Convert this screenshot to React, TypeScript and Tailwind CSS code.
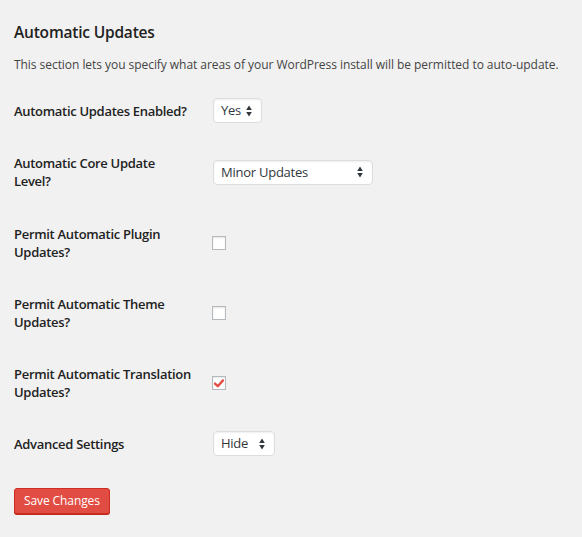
import React from "react";

function Arrows() {
  return (
    <svg width="6" height="12" viewBox="0 0 6 12" className="shrink-0">
      <path d="M3 0.5 L5.8 5 L0.2 5 Z" fill="#32373c" />
      <path d="M3 11.5 L5.8 7 L0.2 7 Z" fill="#32373c" />
    </svg>
  );
}

function Select({ value, width }: { value: string; width: string }) {
  return (
    <div
      className={`flex h-[25px] items-center justify-between rounded-[4px] border border-[#dddddd] bg-white pl-[7px] pr-[9px] text-[13px] tracking-[-0.25px] text-[#32373c] shadow-[inset_0_1px_2px_rgba(0,0,0,0.07)] ${width}`}
    >
      <span className="leading-none">{value}</span>
      <Arrows />
    </div>
  );
}

function Checkbox({ checked }: { checked?: boolean }) {
  return (
    <div className="-ml-px flex size-[14px] items-center justify-center border border-[#b4b9be] bg-white shadow-[inset_0_1px_2px_rgba(0,0,0,0.1)]">
      {checked && (
        <svg width="10" height="9" viewBox="0 0 10 9">
          <path
            d="M1 4.6 L3.8 7.2 L9 1.4"
            fill="none"
            stroke="#e14d43"
            strokeWidth="2.4"
            strokeLinecap="round"
            strokeLinejoin="round"
          />
        </svg>
      )}
    </div>
  );
}

function Row({
  label,
  children,
  className = "",
}: {
  label: React.ReactNode;
  children: React.ReactNode;
  className?: string;
}) {
  return (
    <div className={`flex items-center ${className}`}>
      <div className="w-[199px] shrink-0 whitespace-nowrap text-[13px] font-semibold leading-[18px] tracking-[-0.3px] text-[#222222]">
        {label}
      </div>
      <div className="flex items-center">{children}</div>
    </div>
  );
}

export default function App() {
  return (
    <div
      className="min-h-screen w-full bg-[#f1f1f1] pl-[14px] pt-[20px]"
      style={{ fontFamily: '"Open Sans", "Noto Sans", sans-serif' }}
    >
      <h2 className="text-[15.5px] font-semibold leading-[24px] tracking-[-0.2px] text-[#222222]">
        Automatic Updates
      </h2>
      <p className="mt-[11px] whitespace-nowrap text-[12px] leading-[20px] tracking-[-0.05px] text-[#444444]">
        This section lets you specify what areas of your WordPress install will be
        permitted to auto-update.
      </p>

      <div className="mt-[23px] flex flex-col">
        <Row label="Automatic Updates Enabled?">
          <Select value="Yes" width="w-[49px]" />
        </Row>
        <Row
          className="mt-[31px]"
          label={
            <>
              Automatic Core Update
              <br />
              Level?
            </>
          }
        >
          <Select value="Minor Updates" width="w-[160px]" />
        </Row>
        <Row
          className="mt-[35px]"
          label={
            <>
              Permit Automatic Plugin
              <br />
              Updates?
            </>
          }
        >
          <Checkbox />
        </Row>
        <Row
          className="mt-[34px]"
          label={
            <>
              Permit Automatic Theme
              <br />
              Updates?
            </>
          }
        >
          <Checkbox />
        </Row>
        <Row
          className="mt-[34px]"
          label={
            <>
              Permit Automatic Translation
              <br />
              Updates?
            </>
          }
        >
          <Checkbox checked />
        </Row>
        <Row className="mt-[30px]" label="Advanced Settings">
          <Select value="Hide" width="w-[62px]" />
        </Row>
      </div>

      <button className="mt-[32px] flex h-[26px] items-center rounded-[3px] border border-[#d02c21] bg-[#e14d43] px-[9px] text-[12px] tracking-[-0.1px] text-white shadow-[0_1px_0_#ba281e]">
        Save Changes
      </button>
    </div>
  );
}
